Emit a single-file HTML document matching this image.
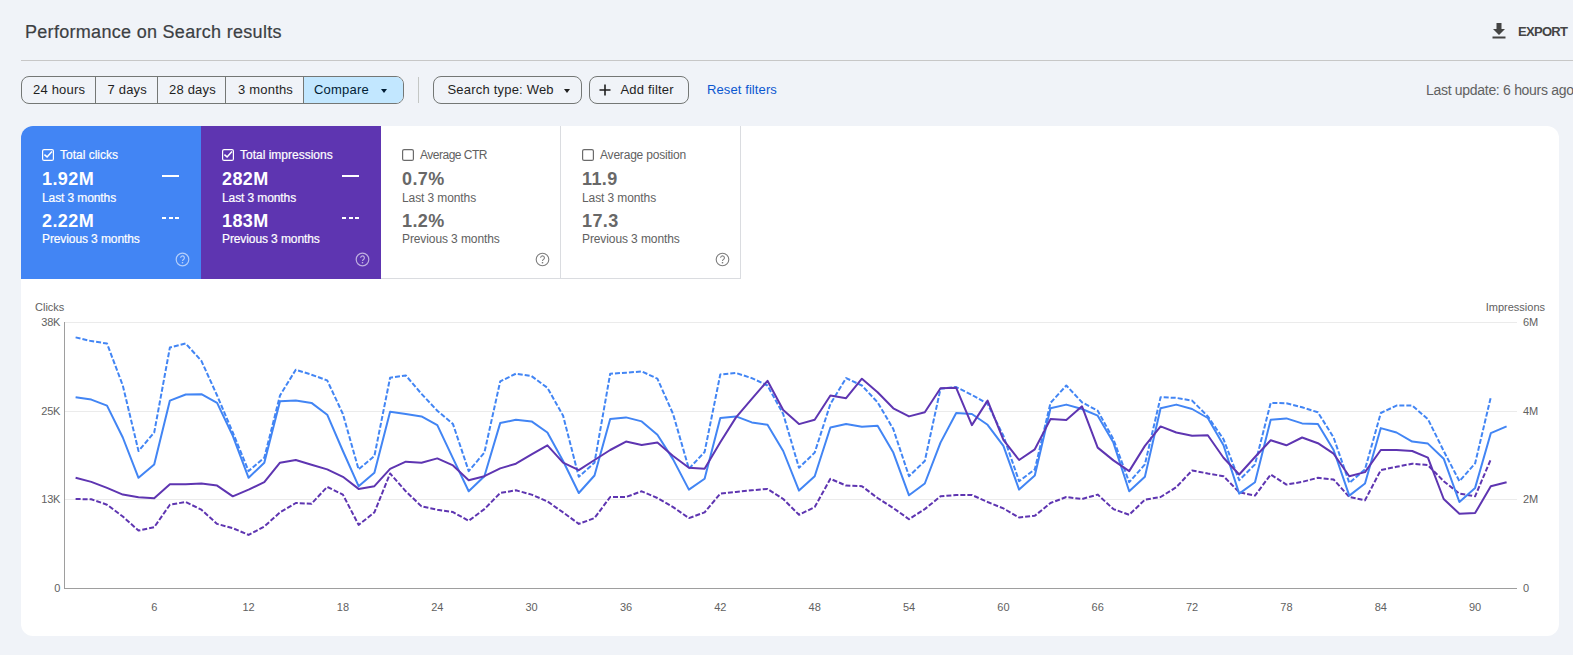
<!DOCTYPE html>
<html><head><meta charset="utf-8">
<style>
*{box-sizing:border-box;margin:0;padding:0}
html,body{width:1573px;height:655px;overflow:hidden;background:#f0f3f8;font-family:"Liberation Sans",sans-serif;position:relative}
.abs{position:absolute}
.title{left:25px;top:23px;font-size:18px;line-height:18px;color:#3c4043;-webkit-text-stroke:0.2px #3c4043;white-space:nowrap;letter-spacing:0.3px}
.divider{left:21px;top:60px;width:1552px;height:1px;background:#c7c7c7}
.export{left:1518px;top:25px;font-size:13px;line-height:13px;font-weight:bold;color:#444;letter-spacing:-0.7px}
.btngroup{left:21px;top:76px;height:28px;border:1px solid #747775;border-radius:8px;display:flex;overflow:hidden}
.btngroup div{height:26px;line-height:25px;font-size:13px;letter-spacing:0.2px;color:#1f1f1f;padding-left:11px;border-right:1px solid #747775;white-space:nowrap}
.btngroup div.cmp{border-right:none;background:#c2e7ff;color:#001d35;padding-left:10px;position:relative}
.vsep{left:418px;top:77px;width:1px;height:26px;background:#c4c7c5}
.chip{top:76px;height:28px;border:1px solid #747775;border-radius:8px;font-size:13px;color:#1f1f1f;line-height:25px;letter-spacing:0.2px;white-space:nowrap}
.tri{position:absolute;width:0;height:0;border-left:3.5px solid transparent;border-right:3.5px solid transparent;border-top:4px solid #1f1f1f;margin-left:0px}
.reset{left:707px;top:83px;font-size:13px;line-height:13px;color:#0b57d0;letter-spacing:0.1px}
.lastupd{left:1426px;top:83px;font-size:14px;line-height:14px;color:#616161;white-space:nowrap;letter-spacing:-0.3px}
.card{left:21px;top:126px;width:1538px;height:510px;background:#fff;border-radius:12px;overflow:hidden}
.m{position:absolute;top:0;width:180px;height:153px}
.m1{left:0;background:#4285f4;color:#fff}
.m2{left:180px;background:#5e35b1;color:#fff}
.m3{left:360px;border-right:1px solid #dadce0;border-bottom:1px solid #dadce0;color:#616161}
.m4{left:540px;border-right:1px solid #dadce0;border-bottom:1px solid #dadce0;color:#616161}
.cb{position:absolute;left:21px;top:23px;width:12px;height:12px}
.lbl{position:absolute;left:39px;top:22px;font-size:12px;line-height:14px;white-space:nowrap}
.m3 .lbl{letter-spacing:-0.5px}.m4 .lbl{letter-spacing:-0.2px}
.m3 .val,.m4 .val{color:#686868}
.m1 .lbl,.m2 .lbl,.m1 .sub,.m2 .sub{-webkit-text-stroke:0.2px #fff}
.val{position:absolute;left:21px;font-size:18px;line-height:18px;font-weight:bold;white-space:nowrap;letter-spacing:0.4px}
.sub{position:absolute;left:21px;font-size:12px;line-height:14px;white-space:nowrap;letter-spacing:-0.1px}
.ind{position:absolute;left:141px;width:17px;height:2px}
.help{position:absolute;left:153.5px;top:126px;width:15px;height:15px}
</style></head><body>
<div class="abs title">Performance on Search results</div>
<svg class="abs" style="left:1492px;top:23px" width="14" height="16" viewBox="0 0 14 16"><path d="M4.5 0h5v6h3.5L7 12 1 6h3.5z" fill="#444"/><rect x="0.5" y="13.5" width="13" height="2" fill="#444"/></svg>
<div class="abs export">EXPORT</div>
<div class="abs divider"></div>
<div class="abs btngroup"><div style="width:74px;padding-left:11px">24 hours</div><div style="width:62px;padding-left:11.5px">7 days</div><div style="width:68px;padding-left:11px">28 days</div><div style="width:78px;padding-left:12px">3 months</div><div class="cmp" style="width:99px">Compare<span class="tri" style="left:77px;top:11.5px;border-top-color:#001d35"></span></div></div>
<div class="abs vsep"></div>
<div class="abs chip" style="left:433px;width:149px;padding-left:13.5px">Search type: Web<span class="tri" style="left:129.5px;top:12px"></span></div>
<div class="abs chip" style="left:589px;width:100px;padding-left:30.5px"><svg class="abs" style="left:9px;top:7px" width="12" height="12" viewBox="0 0 12 12"><path d="M6 0.5v11M0.5 6h11" stroke="#1f1f1f" stroke-width="1.6"/></svg>Add filter</div>
<div class="abs reset">Reset filters</div>
<div class="abs lastupd">Last update: 6 hours ago</div>
<div class="abs card">
  <div class="m m1">
    <svg class="cb" viewBox="0 0 12 12"><rect x="0.6" y="0.6" width="10.8" height="10.8" rx="1.5" fill="none" stroke="#fff" stroke-width="1.2"/><path d="M2.4 5.6L5.1 7.9 10 2.6" fill="none" stroke="#fff" stroke-width="1.5"/></svg>
    <div class="lbl">Total clicks</div>
    <div class="val" style="top:44px">1.92M</div><div class="sub" style="top:65px">Last 3 months</div>
    <div class="val" style="top:86px">2.22M</div><div class="sub" style="top:106px">Previous 3 months</div>
    <div class="ind" style="top:49px;background:#fff"></div>
    <svg class="ind" style="top:91px" width="17" height="2"><path d="M0 1h4M7 1h4M13 1h4" stroke="#fff" stroke-width="2"/></svg>
    <svg class="help" viewBox="0 0 15 15"><circle cx="7.5" cy="7.5" r="6.3" fill="none" stroke="rgba(255,255,255,0.6)" stroke-width="1.2"/><path d="M5.6 5.8a1.9 1.9 0 1 1 2.9 1.6c-.7.5-1 .8-1 1.7" fill="none" stroke="rgba(255,255,255,0.6)" stroke-width="1.2"/><rect x="6.8" y="10" width="1.4" height="1.4" fill="rgba(255,255,255,0.6)"/></svg>
  </div>
  <div class="m m2">
    <svg class="cb" viewBox="0 0 12 12"><rect x="0.6" y="0.6" width="10.8" height="10.8" rx="1.5" fill="none" stroke="#fff" stroke-width="1.2"/><path d="M2.4 5.6L5.1 7.9 10 2.6" fill="none" stroke="#fff" stroke-width="1.5"/></svg>
    <div class="lbl">Total impressions</div>
    <div class="val" style="top:44px">282M</div><div class="sub" style="top:65px">Last 3 months</div>
    <div class="val" style="top:86px">183M</div><div class="sub" style="top:106px">Previous 3 months</div>
    <div class="ind" style="top:49px;background:#fff"></div>
    <svg class="ind" style="top:91px" width="17" height="2"><path d="M0 1h4M7 1h4M13 1h4" stroke="#fff" stroke-width="2"/></svg>
    <svg class="help" viewBox="0 0 15 15"><circle cx="7.5" cy="7.5" r="6.3" fill="none" stroke="rgba(255,255,255,0.6)" stroke-width="1.2"/><path d="M5.6 5.8a1.9 1.9 0 1 1 2.9 1.6c-.7.5-1 .8-1 1.7" fill="none" stroke="rgba(255,255,255,0.6)" stroke-width="1.2"/><rect x="6.8" y="10" width="1.4" height="1.4" fill="rgba(255,255,255,0.6)"/></svg>
  </div>
  <div class="m m3">
    <svg class="cb" viewBox="0 0 12 12"><rect x="0.6" y="0.6" width="10.8" height="10.8" rx="1.5" fill="none" stroke="#6b6b6b" stroke-width="1.2"/></svg>
    <div class="lbl">Average CTR</div>
    <div class="val" style="top:44px">0.7%</div><div class="sub" style="top:65px">Last 3 months</div>
    <div class="val" style="top:86px">1.2%</div><div class="sub" style="top:106px">Previous 3 months</div>
    <svg class="help" viewBox="0 0 15 15"><circle cx="7.5" cy="7.5" r="6.3" fill="none" stroke="#7d7d7d" stroke-width="1.1"/><path d="M5.6 5.8a1.9 1.9 0 1 1 2.9 1.6c-.7.5-1 .8-1 1.7" fill="none" stroke="#7d7d7d" stroke-width="1.1"/><rect x="6.8" y="10" width="1.4" height="1.4" fill="#7d7d7d"/></svg>
  </div>
  <div class="m m4">
    <svg class="cb" viewBox="0 0 12 12"><rect x="0.6" y="0.6" width="10.8" height="10.8" rx="1.5" fill="none" stroke="#6b6b6b" stroke-width="1.2"/></svg>
    <div class="lbl">Average position</div>
    <div class="val" style="top:44px">11.9</div><div class="sub" style="top:65px">Last 3 months</div>
    <div class="val" style="top:86px">17.3</div><div class="sub" style="top:106px">Previous 3 months</div>
    <svg class="help" viewBox="0 0 15 15"><circle cx="7.5" cy="7.5" r="6.3" fill="none" stroke="#7d7d7d" stroke-width="1.1"/><path d="M5.6 5.8a1.9 1.9 0 1 1 2.9 1.6c-.7.5-1 .8-1 1.7" fill="none" stroke="#7d7d7d" stroke-width="1.1"/><rect x="6.8" y="10" width="1.4" height="1.4" fill="#7d7d7d"/></svg>
  </div>
</div>
<svg class="abs" style="left:0;top:0" width="1573" height="655">
<line x1="65" y1="322.5" x2="1517" y2="322.5" stroke="#ebebeb" stroke-width="1"/>
<line x1="65" y1="411.5" x2="1517" y2="411.5" stroke="#ebebeb" stroke-width="1"/>
<line x1="65" y1="499.5" x2="1517" y2="499.5" stroke="#ebebeb" stroke-width="1"/>
<line x1="64.5" y1="322" x2="64.5" y2="588.5" stroke="#9e9e9e" stroke-width="1"/>
<line x1="64" y1="588.5" x2="1517" y2="588.5" stroke="#9e9e9e" stroke-width="1"/>
<polyline fill="none" stroke="#4285f4" stroke-width="2" stroke-dasharray="5 2" stroke-linejoin="round" points="75.6,337.4 91.3,341.1 107.0,343.5 122.8,385.5 138.5,451.0 154.2,432.5 169.9,347.5 185.7,343.5 201.4,360.9 217.1,395.5 232.8,432.5 248.6,471.1 264.3,457.7 280.0,395.5 295.8,369.7 311.5,374.7 327.2,380.4 342.9,414.0 358.6,469.4 374.4,456.0 390.1,377.7 405.8,375.4 421.5,393.9 437.3,410.7 453.0,424.1 468.7,471.1 484.4,452.6 500.2,381.4 515.9,373.7 531.6,376.1 547.4,387.8 563.1,415.7 578.8,476.8 594.5,462.7 610.2,373.7 626.0,372.7 641.7,371.4 657.4,378.7 673.1,414.0 688.9,468.8 704.6,452.0 720.3,374.4 736.0,373.0 751.8,378.1 767.5,385.5 783.2,414.0 799.0,467.8 814.7,452.6 830.4,403.9 846.1,378.1 861.9,385.5 877.6,402.3 893.3,429.1 909.0,476.2 924.8,461.0 940.5,388.8 956.2,387.1 971.9,394.9 987.6,403.9 1003.4,435.8 1019.1,481.2 1034.8,469.4 1050.5,402.9 1066.3,385.5 1082.0,402.3 1097.7,410.7 1113.4,439.2 1129.2,482.2 1144.9,464.4 1160.6,397.2 1176.3,397.9 1192.1,400.6 1207.8,416.4 1223.5,439.2 1239.2,480.2 1255.0,464.4 1270.7,402.9 1286.4,403.3 1302.1,407.3 1317.9,412.3 1333.6,437.5 1349.3,482.9 1365.0,469.4 1380.8,413.0 1396.5,405.6 1412.2,405.6 1427.9,419.1 1443.7,451.0 1459.4,481.2 1475.1,463.4 1490.8,397.2"/>
<polyline fill="none" stroke="#5e35b1" stroke-width="2" stroke-dasharray="5 2" stroke-linejoin="round" points="75.6,499.0 91.3,499.3 107.0,504.7 122.8,516.5 138.5,530.6 154.2,527.2 169.9,504.7 185.7,502.0 201.4,509.7 217.1,523.9 232.8,528.2 248.6,534.9 264.3,526.5 280.0,512.4 295.8,503.0 311.5,503.7 327.2,486.9 342.9,494.6 358.6,524.9 374.4,512.4 390.1,473.5 405.8,491.3 421.5,506.4 437.3,509.7 453.0,512.1 468.7,520.8 484.4,509.1 500.2,493.0 515.9,490.3 531.6,494.6 547.4,501.4 563.1,512.4 578.8,523.9 594.5,518.1 610.2,497.0 626.0,497.0 641.7,491.3 657.4,498.0 673.1,507.1 688.9,518.1 704.6,512.4 720.3,493.6 736.0,491.9 751.8,490.3 767.5,488.9 783.2,499.0 799.0,514.8 814.7,507.1 830.4,478.8 846.1,485.6 861.9,486.2 877.6,498.0 893.3,508.1 909.0,519.2 924.8,509.1 940.5,496.3 956.2,495.0 971.9,495.0 987.6,502.0 1003.4,508.4 1019.1,517.5 1034.8,515.8 1050.5,503.0 1066.3,497.0 1082.0,499.0 1097.7,494.6 1113.4,509.1 1129.2,514.8 1144.9,499.7 1160.6,497.0 1176.3,487.2 1192.1,470.4 1207.8,473.5 1223.5,476.2 1239.2,492.3 1255.0,495.6 1270.7,474.5 1286.4,484.6 1302.1,481.9 1317.9,477.8 1333.6,479.5 1349.3,497.0 1365.0,500.3 1380.8,470.1 1396.5,466.8 1412.2,463.7 1427.9,465.1 1443.7,481.2 1459.4,493.6 1475.1,496.3 1490.8,459.4"/>
<polyline fill="none" stroke="#4285f4" stroke-width="2" stroke-linejoin="round" points="75.6,397.2 91.3,399.6 107.0,405.6 122.8,437.5 138.5,477.8 154.2,464.4 169.9,400.6 185.7,394.5 201.4,394.2 217.1,402.9 232.8,435.8 248.6,477.8 264.3,462.7 280.0,401.3 295.8,400.6 311.5,402.9 327.2,414.7 342.9,451.0 358.6,486.2 374.4,472.8 390.1,411.7 405.8,414.0 421.5,416.4 437.3,425.1 453.0,458.4 468.7,491.3 484.4,476.2 500.2,423.1 515.9,419.7 531.6,421.4 547.4,432.5 563.1,461.0 578.8,493.0 594.5,475.5 610.2,419.1 626.0,417.4 641.7,421.4 657.4,434.8 673.1,459.4 688.9,489.6 704.6,478.8 720.3,418.0 736.0,416.4 751.8,422.4 767.5,424.8 783.2,451.0 799.0,490.6 814.7,476.2 830.4,427.5 846.1,424.1 861.9,426.8 877.6,425.8 893.3,452.6 909.0,495.3 924.8,483.5 940.5,442.6 956.2,413.0 971.9,414.0 987.6,424.8 1003.4,445.9 1019.1,489.6 1034.8,475.5 1050.5,408.3 1066.3,404.6 1082.0,409.0 1097.7,415.7 1113.4,442.6 1129.2,491.3 1144.9,476.8 1160.6,408.3 1176.3,404.6 1192.1,409.0 1207.8,418.0 1223.5,445.3 1239.2,493.6 1255.0,482.2 1270.7,419.7 1286.4,418.4 1302.1,423.4 1317.9,424.1 1333.6,450.0 1349.3,495.6 1365.0,483.5 1380.8,428.1 1396.5,432.5 1412.2,441.6 1427.9,443.6 1443.7,458.7 1459.4,502.0 1475.1,487.9 1490.8,433.2 1506.6,426.4"/>
<polyline fill="none" stroke="#5e35b1" stroke-width="2" stroke-linejoin="round" points="75.6,477.8 91.3,481.9 107.0,487.9 122.8,494.6 138.5,497.3 154.2,498.3 169.9,484.2 185.7,484.2 201.4,483.5 217.1,485.6 232.8,496.3 248.6,489.6 264.3,482.2 280.0,462.7 295.8,460.0 311.5,464.7 327.2,469.4 342.9,476.8 358.6,488.9 374.4,486.2 390.1,468.8 405.8,461.7 421.5,462.7 437.3,458.4 453.0,465.4 468.7,480.2 484.4,476.2 500.2,468.4 515.9,463.7 531.6,454.3 547.4,445.3 563.1,462.7 578.8,470.1 594.5,460.0 610.2,450.0 626.0,441.6 641.7,444.9 657.4,442.6 673.1,456.0 688.9,467.8 704.6,468.8 720.3,442.2 736.0,417.4 751.8,398.9 767.5,380.8 783.2,410.0 799.0,424.1 814.7,419.7 830.4,395.5 846.1,398.2 861.9,378.7 877.6,392.2 893.3,408.3 909.0,416.4 924.8,412.3 940.5,388.2 956.2,387.8 971.9,425.1 987.6,400.6 1003.4,439.9 1019.1,460.0 1034.8,449.3 1050.5,419.1 1066.3,420.1 1082.0,406.3 1097.7,447.6 1113.4,460.4 1129.2,471.1 1144.9,445.9 1160.6,426.4 1176.3,432.5 1192.1,435.8 1207.8,435.2 1223.5,457.7 1239.2,474.5 1255.0,457.0 1270.7,440.2 1286.4,445.3 1302.1,437.5 1317.9,443.2 1333.6,453.7 1349.3,476.2 1365.0,472.1 1380.8,450.0 1396.5,450.0 1412.2,451.0 1427.9,457.7 1443.7,499.0 1459.4,513.8 1475.1,513.1 1490.8,486.2 1506.6,482.2"/>
<text x="35" y="311" font-family="Liberation Sans, sans-serif" font-size="11" fill="#616161">Clicks</text>
<text x="1545" y="311" font-family="Liberation Sans, sans-serif" font-size="11" fill="#616161" text-anchor="end">Impressions</text>
<text x="60" y="326" font-family="Liberation Sans, sans-serif" font-size="11" fill="#616161" text-anchor="end" letter-spacing="-0.3">38K</text>
<text x="60" y="415" font-family="Liberation Sans, sans-serif" font-size="11" fill="#616161" text-anchor="end" letter-spacing="-0.3">25K</text>
<text x="60" y="503" font-family="Liberation Sans, sans-serif" font-size="11" fill="#616161" text-anchor="end" letter-spacing="-0.3">13K</text>
<text x="60" y="592" font-family="Liberation Sans, sans-serif" font-size="11" fill="#616161" text-anchor="end" letter-spacing="-0.3">0</text>
<text x="1523" y="326" font-family="Liberation Sans, sans-serif" font-size="11" fill="#616161">6M</text>
<text x="1523" y="415" font-family="Liberation Sans, sans-serif" font-size="11" fill="#616161">4M</text>
<text x="1523" y="503" font-family="Liberation Sans, sans-serif" font-size="11" fill="#616161">2M</text>
<text x="1523" y="592" font-family="Liberation Sans, sans-serif" font-size="11" fill="#616161">0</text>
<text x="154.2" y="611" font-family="Liberation Sans, sans-serif" font-size="11" fill="#616161" text-anchor="middle">6</text>
<text x="248.6" y="611" font-family="Liberation Sans, sans-serif" font-size="11" fill="#616161" text-anchor="middle">12</text>
<text x="342.9" y="611" font-family="Liberation Sans, sans-serif" font-size="11" fill="#616161" text-anchor="middle">18</text>
<text x="437.3" y="611" font-family="Liberation Sans, sans-serif" font-size="11" fill="#616161" text-anchor="middle">24</text>
<text x="531.6" y="611" font-family="Liberation Sans, sans-serif" font-size="11" fill="#616161" text-anchor="middle">30</text>
<text x="626.0" y="611" font-family="Liberation Sans, sans-serif" font-size="11" fill="#616161" text-anchor="middle">36</text>
<text x="720.3" y="611" font-family="Liberation Sans, sans-serif" font-size="11" fill="#616161" text-anchor="middle">42</text>
<text x="814.7" y="611" font-family="Liberation Sans, sans-serif" font-size="11" fill="#616161" text-anchor="middle">48</text>
<text x="909.0" y="611" font-family="Liberation Sans, sans-serif" font-size="11" fill="#616161" text-anchor="middle">54</text>
<text x="1003.4" y="611" font-family="Liberation Sans, sans-serif" font-size="11" fill="#616161" text-anchor="middle">60</text>
<text x="1097.7" y="611" font-family="Liberation Sans, sans-serif" font-size="11" fill="#616161" text-anchor="middle">66</text>
<text x="1192.1" y="611" font-family="Liberation Sans, sans-serif" font-size="11" fill="#616161" text-anchor="middle">72</text>
<text x="1286.4" y="611" font-family="Liberation Sans, sans-serif" font-size="11" fill="#616161" text-anchor="middle">78</text>
<text x="1380.8" y="611" font-family="Liberation Sans, sans-serif" font-size="11" fill="#616161" text-anchor="middle">84</text>
<text x="1475.1" y="611" font-family="Liberation Sans, sans-serif" font-size="11" fill="#616161" text-anchor="middle">90</text>
</svg>
</body></html>
